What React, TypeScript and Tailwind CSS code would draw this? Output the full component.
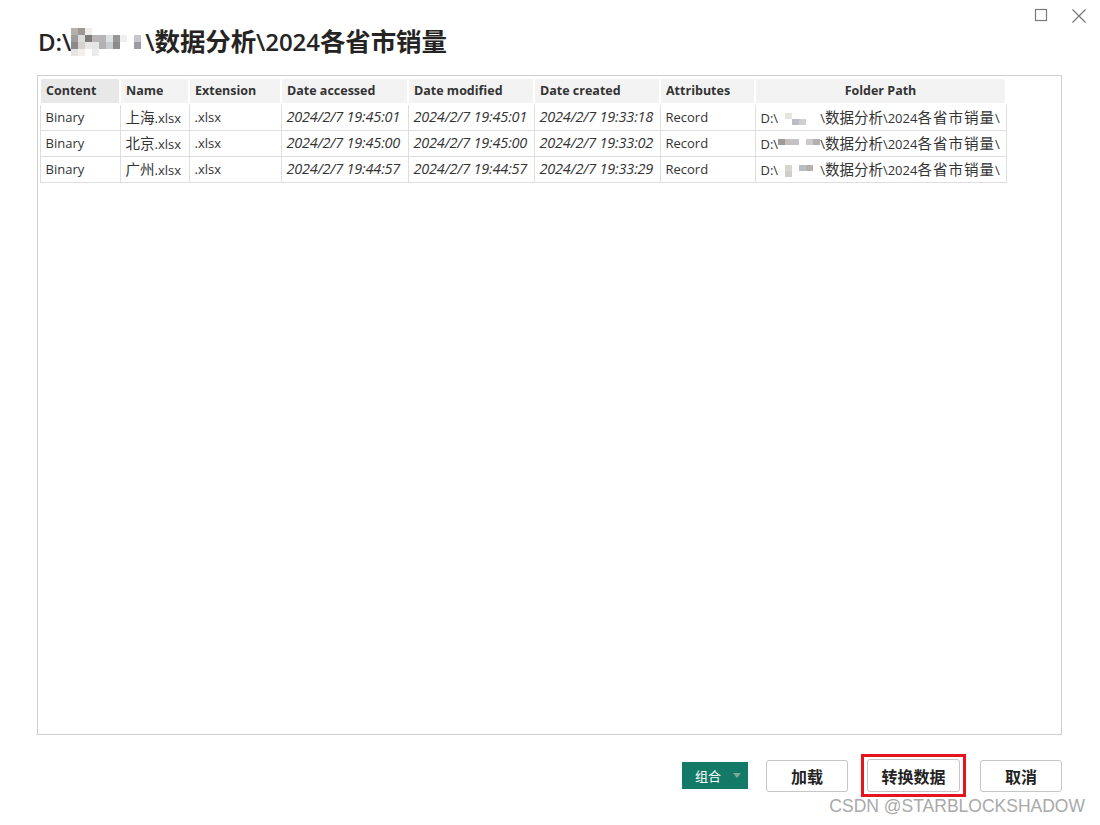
import React from "react";

const cols = [80, 69, 92, 127, 126, 126, 95, 251];
const headers = ["Content", "Name", "Extension", "Date accessed", "Date modified", "Date created", "Attributes", "Folder Path"];
const rows = [
  ["Binary", "上海", ".xlsx", "2024/2/7 19:45:01", "2024/2/7 19:45:01", "2024/2/7 19:33:18", "Record"],
  ["Binary", "北京", ".xlsx", "2024/2/7 19:45:00", "2024/2/7 19:45:00", "2024/2/7 19:33:02", "Record"],
  ["Binary", "广州", ".xlsx", "2024/2/7 19:44:57", "2024/2/7 19:44:57", "2024/2/7 19:33:29", "Record"],
];

const mosaicTitle = [
  ["#b4b0ae", "#9c9896", "#f0eeec", "#fff", "#fff", "#fff", "#fff", "#fff", "#fff", "#fff", "#fff"],
  ["#a29d9b", "#dcdcdc", "#7e7a7a", "#b9b5b4", "#b6b4b4", "#dde1e4", "#999696", "#eef0f0", "#fff", "#c6c7cc", "#fff"],
  ["#8f8a89", "#d8d2ce", "#ebe7e4", "#e6e6e6", "#b3b1b1", "#c8cdd2", "#8d8a8a", "#fff", "#fff", "#9d9ca2", "#fff"],
  ["#e8e4e2", "#f2f0ee", "#fff", "#ececec", "#fff", "#fff", "#fff", "#fff", "#fff", "#fff", "#fff"],
];

function TitleMosaic() {
  return (
    <span className="inline-flex flex-col">
      {mosaicTitle.map((r, i) => (
        <span key={i} className="flex">
          {r.map((c, j) => (
            <span key={j} className="w-[7px] h-[7px]" style={{ background: c }} />
          ))}
        </span>
      ))}
    </span>
  );
}

const mosaicRows = [
  [["#fff", "#e6e4e1", "#fff", "#fff", "#fff", "#fff"], ["#fff", "#fff", "#b8bcc4", "#cfcfd0", "#fff", "#fff"]],
  [["#9e9a98", "#c4c1be", "#c3c3c5", "#fff", "#cccaca", "#b4b0ae"], ["#fff", "#fff", "#fff", "#fff", "#fff", "#fff"]],
  [["#fff", "#d8d4d0", "#fff", "#b9bcc2", "#b7b1ae", "#fff"], ["#fff", "#d0ccc9", "#fff", "#fff", "#fff", "#fff"]],
];

function PathMosaic({ idx }: { idx: number }) {
  return (
    <span className="inline-flex flex-col align-middle">
      {mosaicRows[idx].map((r, i) => (
        <span key={i} className="flex">
          {r.map((c, j) => (
            <span key={j} className="w-[7px] h-[6px]" style={{ background: c }} />
          ))}
        </span>
      ))}
    </span>
  );
}

const cjk = "font-['Noto_Sans_CJK_SC',sans-serif] text-[14.5px] text-[#333]";

export default function App() {
  return (
    <div className="w-[1100px] h-[825px] bg-white overflow-hidden text-[#333] font-['Open_Sans','Noto_Sans_CJK_SC',sans-serif]">
      {/* window controls */}
      <div className="flex justify-end items-start h-[20px] pt-[8px] pr-[13px] gap-[23px]">
        <svg width="14" height="14" viewBox="0 0 14 14">
          <rect x="1.5" y="1.5" width="11" height="11" fill="none" stroke="#7a7a7a" strokeWidth="1.2" />
        </svg>
        <svg width="16" height="16" viewBox="0 0 16 16">
          <path d="M1.5 1.5 L14.5 14.5 M14.5 1.5 L1.5 14.5" stroke="#7a7a7a" strokeWidth="1.3" />
        </svg>
      </div>

      {/* title */}
      <div className="pl-[38px] h-[44px] flex items-center text-[24px] font-semibold text-[#252423] leading-none tracking-[-0.1px]">
        <span>D:\</span>
        <TitleMosaic />
        <span className="-ml-[3px]">
          \<span className="text-[25.5px]">数据分析</span>\2024<span className="text-[25.5px]">各省市销量</span>
        </span>
      </div>

      {/* table frame */}
      <div className="ml-[37px] mt-[11px] w-[1025px] h-[660px] border border-[#cfcfcf] pl-[1px] pt-[1px]">
        <table className="border-collapse table-fixed text-[13px] leading-[18px]">
          <colgroup>
            {cols.map((w, i) => (
              <col key={i} style={{ width: w }} />
            ))}
          </colgroup>
          <thead>
            <tr className="h-[26px]">
              {headers.map((h, i) => (
                <th
                  key={h}
                  className={`font-bold text-[12.5px] text-[#333] border-2 border-white px-[5px] whitespace-nowrap ${
                    i === 7 ? "text-center" : "text-left"
                  } ${i === 0 ? "bg-[#e8e8e8]" : "bg-[#f3f3f3]"}`}
                >
                  {h}
                </th>
              ))}
            </tr>
          </thead>
          <tbody>
            {rows.map((r, ri) => (
              <tr key={ri} className="h-[26px]">
                {r.map((c, ci) => (
                  <td
                    key={ci}
                    className={`border border-[#dedede] px-[5px] align-middle whitespace-nowrap overflow-hidden ${
                      ci >= 3 && ci <= 5 ? "italic text-[14.5px] tracking-[-0.2px]" : ""
                    }`}
                  >
                    {ci === 1 ? (
                      <>
                        <span className={cjk}>{c}</span>
                        <span>.xlsx</span>
                      </>
                    ) : (
                      c
                    )}
                  </td>
                ))}
                <td className="border border-[#dedede] pl-[5px] align-middle whitespace-nowrap overflow-hidden">
                  <span>D:\</span>
                  <PathMosaic idx={ri} />
                  <span>\</span>
                  <span className={cjk}>数据分析</span>
                  <span>\2024</span>
                  <span className={`${cjk} tracking-[1px]`}>各省市销量</span>
                  <span>\</span>
                </td>
              </tr>
            ))}
          </tbody>
        </table>
      </div>

      {/* bottom buttons */}
      <div className="flex items-center justify-end pr-[38px] mt-[19px] h-[43px]">
        <div className="w-[66px] h-[27px] bg-[#127a67] flex items-center pl-[13px] mr-[18px]">
          <span className="text-white text-[13px] font-['Noto_Sans_CJK_SC',sans-serif]">组合</span>
          <svg width="8" height="5" viewBox="0 0 8 5" className="ml-[12px]">
            <path d="M0 0 L8 0 L4 5 Z" fill="#7fa89c" />
          </svg>
        </div>
        <button className="w-[82px] h-[32px] border border-[#c6c6c6] rounded-[3px] bg-white text-[16px] font-bold text-[#222] mr-[13px] font-['Noto_Sans_CJK_SC',sans-serif]">
          加载
        </button>
        <div className="border-[3px] border-[#e5141e] w-[105px] h-[43px] flex items-center justify-center mr-[14px]">
          <button className="w-[93px] h-[33px] border border-[#c6c6c6] rounded-[3px] bg-white text-[16px] font-bold text-[#222] font-['Noto_Sans_CJK_SC',sans-serif]">
            转换数据
          </button>
        </div>
        <button className="w-[82px] h-[32px] border border-[#c6c6c6] rounded-[3px] bg-white text-[16px] font-bold text-[#222] font-['Noto_Sans_CJK_SC',sans-serif]">
          取消
        </button>
      </div>

      {/* watermark */}
      <div className="flex justify-end pr-[15px] mt-[1px]">
        <span className="text-[17.5px] text-[#a9a9a9] leading-none font-['Liberation_Sans',Arial,sans-serif]">
          CSDN @STARBLOCKSHADOW
        </span>
      </div>
    </div>
  );
}
